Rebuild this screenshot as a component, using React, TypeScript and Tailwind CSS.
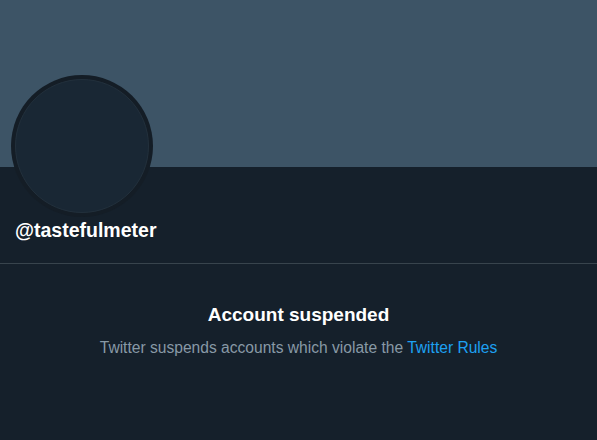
export default function App() {
  return (
    <div
      className="w-[597px] h-[440px] bg-[#15202b] overflow-hidden"
      style={{ fontFamily: '"Liberation Sans", Arial, sans-serif' }}
    >
      <div className="h-[167px] bg-[#3d5466]" />
      <div className="pl-[11px] -mt-[92px]">
        <div className="w-[142px] h-[142px] rounded-full bg-[#141d26] p-[4px]">
          <div className="w-full h-full rounded-full bg-[#192734] border border-[#22303c]" />
        </div>
      </div>
      <div className="px-[15px] pt-[1px] pb-[21px]">
        <div className="text-[19.5px] leading-[24px] font-bold text-white">@tastefulmeter</div>
      </div>
      <div className="h-px bg-[#38444d]" />
      <div className="flex flex-col items-center pt-[39px]">
        <div className="text-[19px] leading-[24px] font-bold text-white">Account suspended</div>
        <div className="mt-[11px] text-[15.6px] leading-[20px] text-[#8899a6]">
          Twitter suspends accounts which violate the{" "}
          <span className="text-[#1da1f2]">Twitter Rules</span>
        </div>
      </div>
    </div>
  );
}
